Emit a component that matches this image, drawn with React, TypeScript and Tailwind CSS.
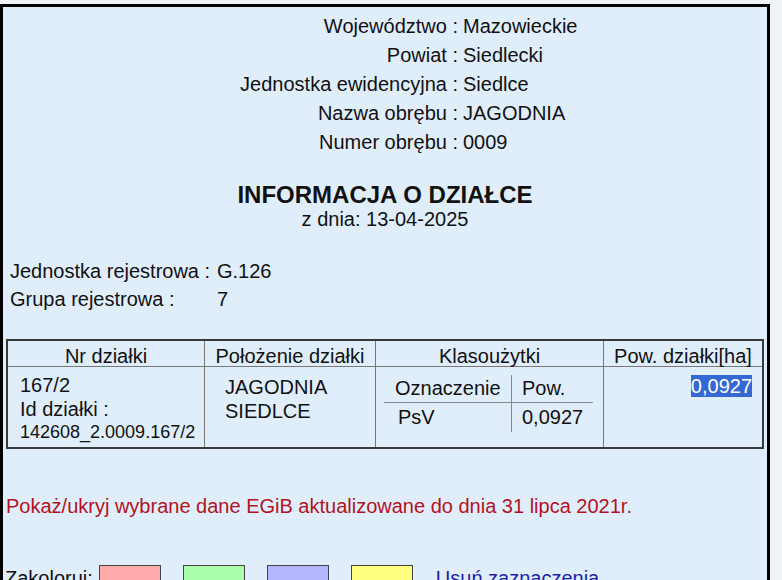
const header: [string, string][] = [
  ["Województwo :", "Mazowieckie"],
  ["Powiat :", "Siedlecki"],
  ["Jednostka ewidencyjna :", "Siedlce"],
  ["Nazwa obrębu :", "JAGODNIA"],
  ["Numer obrębu :", "0009"],
];

const swatches = ["bg-[#ffaaaa]", "bg-[#aaffaa]", "bg-[#b4b4ff]", "bg-[#ffff80]"];

export default function App() {
  return (
    <div className="min-h-screen overflow-hidden bg-[#eff3f8] pt-[4px] font-['Liberation_Sans',Arial,sans-serif] text-[20px] leading-[23px] text-[#111]">
      <div className="h-[640px] w-[770px] border-[3px] border-black bg-[#e0eefc]">
        {/* dane obrębu */}
        <div className="pt-[5px]">
          {header.map(([label, value]) => (
            <div key={label} className="flex h-[29px] items-center">
              <div className="w-[455px] text-right">{label}</div>
              <div className="pl-[5px]">{value}</div>
            </div>
          ))}
        </div>

        <div className="mt-[24px] text-center text-[24px] font-bold leading-[28px]">INFORMACJA O DZIAŁCE</div>
        <div className="text-center leading-[21px]">z dnia: 13-04-2025</div>

        <div className="mt-[27px] pl-[7px]">
          <div className="flex h-[28px] items-center">
            <div className="w-[207px]">Jednostka rejestrowa :</div>
            <div>G.126</div>
          </div>
          <div className="flex h-[28px] items-center">
            <div className="w-[207px]">Grupa rejestrowa :</div>
            <div>7</div>
          </div>
        </div>

        {/* tabela działki */}
        <div className="ml-[3px] mt-[26px] w-[758px] border-2 border-[#3a3a3a]">
          <div className="grid h-[26px] grid-cols-[196px_171px_228px_159px] border-b border-[#777] text-center">
            <div className="pt-[4px]">Nr działki</div>
            <div className="border-l border-[#777] pt-[4px]">Położenie działki</div>
            <div className="border-l border-[#777] pt-[4px]">Klasoużytki</div>
            <div className="border-l border-[#777] pt-[4px]">Pow. działki[ha]</div>
          </div>
          <div className="grid h-[80px] grid-cols-[196px_171px_228px_159px]">
            <div className="pl-[12px] pt-[6px] leading-[24px]">
              <div>167/2</div>
              <div>Id działki :</div>
              <div className="text-[18px] leading-[22px]">142608_2.0009.167/2</div>
            </div>
            <div className="border-l border-[#777] pl-[20px] pt-[8px] leading-[24px]">
              <div>JAGODNIA</div>
              <div>SIEDLCE</div>
            </div>
            <div className="border-l border-[#777] pl-[8px] pt-[8px]">
              <div className="w-[209px]">
                <div className="grid h-[28px] grid-cols-[128px_81px] border-b border-[#888]">
                  <div className="flex items-center border-r border-[#888] pl-[11px]">Oznaczenie</div>
                  <div className="flex items-center pl-[10px]">Pow.</div>
                </div>
                <div className="grid h-[29px] grid-cols-[128px_81px]">
                  <div className="flex items-center border-r border-[#888] pl-[14px]">PsV</div>
                  <div className="flex items-center pl-[10px]">0,0927</div>
                </div>
              </div>
            </div>
            <div className="border-l border-[#777] pr-[10px] pt-[8px] text-right">
              <span className="bg-[#3468d2] leading-[22px] text-white">0,0927</span>
            </div>
          </div>
        </div>

        <div className="mt-[46px] pl-[3px] text-[#b3121f]">
          Pokaż/ukryj wybrane dane EGiB aktualizowane do dnia 31 lipca 2021r.
        </div>

        <div className="mt-[47px] flex items-start pl-[2px]">
          <span className="pt-[2px]">Zakoloruj:</span>
          <div className="ml-[6px] flex gap-[22px]">
            {swatches.map((c) => (
              <div key={c} className={`h-[24px] w-[62px] border border-[#444] ${c}`} />
            ))}
          </div>
          <span className="ml-[23px] pt-[2px] text-[#1f1fa6]">Usuń zaznaczenia</span>
        </div>
      </div>
    </div>
  );
}
